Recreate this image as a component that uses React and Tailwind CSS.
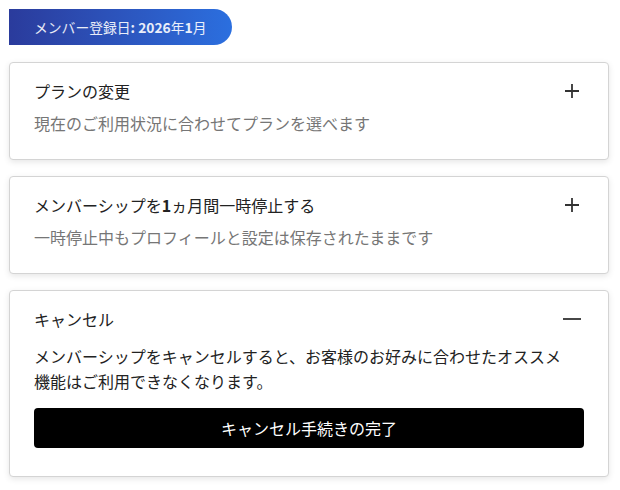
import { useState } from 'react';

const font = { fontFamily: '"Noto Sans CJK JP", "Noto Sans", sans-serif' };

function PlusIcon() {
    return (
        <svg width="20" height="20" viewBox="0 0 20 20" className="text-[#333]">
            <path d="M10 3v14M3 10h14" stroke="currentColor" strokeWidth="1.8" fill="none" />
        </svg>
    );
}

function MinusIcon() {
    return (
        <svg width="20" height="20" viewBox="0 0 20 20" className="text-[#333]">
            <path d="M1 10h18" stroke="currentColor" strokeWidth="1.8" fill="none" />
        </svg>
    );
}

function Card({ title, subtitle, open, onToggle, children }) {
    return (
        <div className="bg-white border border-[#d4d4d4] rounded-[4px] shadow-[0_2px_6px_rgba(0,0,0,0.10)]">
            <button
                onClick={onToggle}
                className="w-full flex items-center justify-between pl-6 pr-[26px] pt-4 text-left"
            >
                <span className="text-[16px] leading-6 text-[#222]">{title}</span>
                {open ? <MinusIcon /> : <PlusIcon />}
            </button>
            {!open && (
                <p className="px-6 mt-2 pb-6 text-[16px] leading-6 text-[#767676]">{subtitle}</p>
            )}
            {open && children}
        </div>
    );
}

export default function App() {
    const [openId, setOpenId] = useState('cancel');
    const toggle = (id) => setOpenId(openId === id ? null : id);

    return (
        <div className="min-h-[490px] bg-white pt-[9px] pl-[9px] pr-[11px]" style={font}>
            <div className="inline-flex items-center h-9 px-[25px] rounded-r-full bg-gradient-to-r from-[#2a3b9c] to-[#2b6fdf] text-[13.8px] text-white/90">
                メンバー登録日<span className="font-bold">: 2026</span>年<span className="font-bold">1</span>月
            </div>

            <div className="mt-[17px] flex flex-col gap-4">
                <Card
                    title="プランの変更"
                    subtitle="現在のご利用状況に合わせてプランを選べます"
                    open={openId === 'plan'}
                    onToggle={() => toggle('plan')}
                />
                <Card
                    title={<>メンバーシップを<span className="font-bold">1</span>ヵ月間一時停止する</>}
                    subtitle="一時停止中もプロフィールと設定は保存されたままです"
                    open={openId === 'pause'}
                    onToggle={() => toggle('pause')}
                />
                <Card
                    title="キャンセル"
                    open={openId === 'cancel'}
                    onToggle={() => toggle('cancel')}
                >
                    <div className="px-6 pt-[13px] pb-7">
                        <p className="text-[16px] leading-[25px] text-[#222]">
                            メンバーシップをキャンセルすると、お客様のお好みに合わせたオススメ<br />
                            機能はご利用できなくなります。
                        </p>
                        <button className="mt-[14px] w-full h-10 rounded-[4px] bg-black text-white text-[16px]">
                            キャンセル手続きの完了
                        </button>
                    </div>
                </Card>
            </div>
        </div>
    );
}
